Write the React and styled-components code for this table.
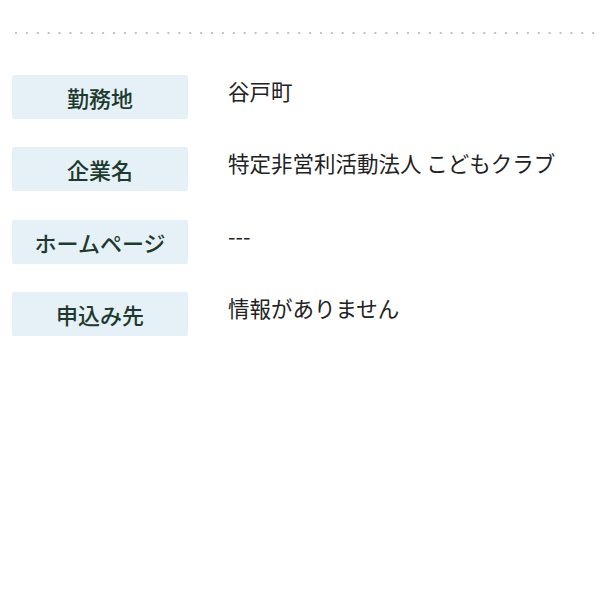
import React from "react";
import styled, { createGlobalStyle } from "styled-components";

const infoList = [
  { id: "WORKPLACE", label: "勤務地", value: "谷戸町" },
  { id: "COMPANY", label: "企業名", value: "特定非営利活動法人 こどもクラブ" },
  { id: "HOMEPAGE", label: "ホームページ", value: "---" },
  { id: "APPLY_TO", label: "申込み先", value: "情報がありません" },
];

const GlobalStyle = createGlobalStyle`
  body {
    margin: 0;
    background: #ffffff;
    font-family: "Noto Sans CJK JP", "Noto Sans", sans-serif;
  }
`;

const App = () => {
  return (
    <>
      <GlobalStyle />
      <MainContainer>
        <DottedLine />
        <InfoList>
          {infoList.map((eachItem) => (
            <InfoRow key={eachItem.id}>
              <Label>{eachItem.label}</Label>
              <Value>{eachItem.value}</Value>
            </InfoRow>
          ))}
        </InfoList>
      </MainContainer>
    </>
  );
};

export default App;

const MainContainer = styled.div`
  width: 600px;
  height: 600px;
  padding-top: 32px;
  box-sizing: border-box;
`;

const DottedLine = styled.div`
  height: 2px;
  margin-left: 15px;
  background-image: linear-gradient(to right, #c2c2c2 2px, transparent 2px);
  background-size: 10.9px 2px;
  background-repeat: repeat-x;
`;

const InfoList = styled.div`
  display: flex;
  flex-direction: column;
  gap: 28.3px;
  padding: 41px 12px 0;
`;

const InfoRow = styled.div`
  display: flex;
  align-items: flex-start;
  gap: 40px;
`;

const Label = styled.div`
  flex: 0 0 176px;
  height: 44px;
  display: flex;
  align-items: center;
  justify-content: center;
  background: #e5f1f6;
  border-radius: 2px;
  color: #1e3a2f;
  font-size: 22px;
  font-weight: 500;
`;

const Value = styled.div`
  font-size: 21.5px;
  line-height: 32px;
  color: #222222;
`;
